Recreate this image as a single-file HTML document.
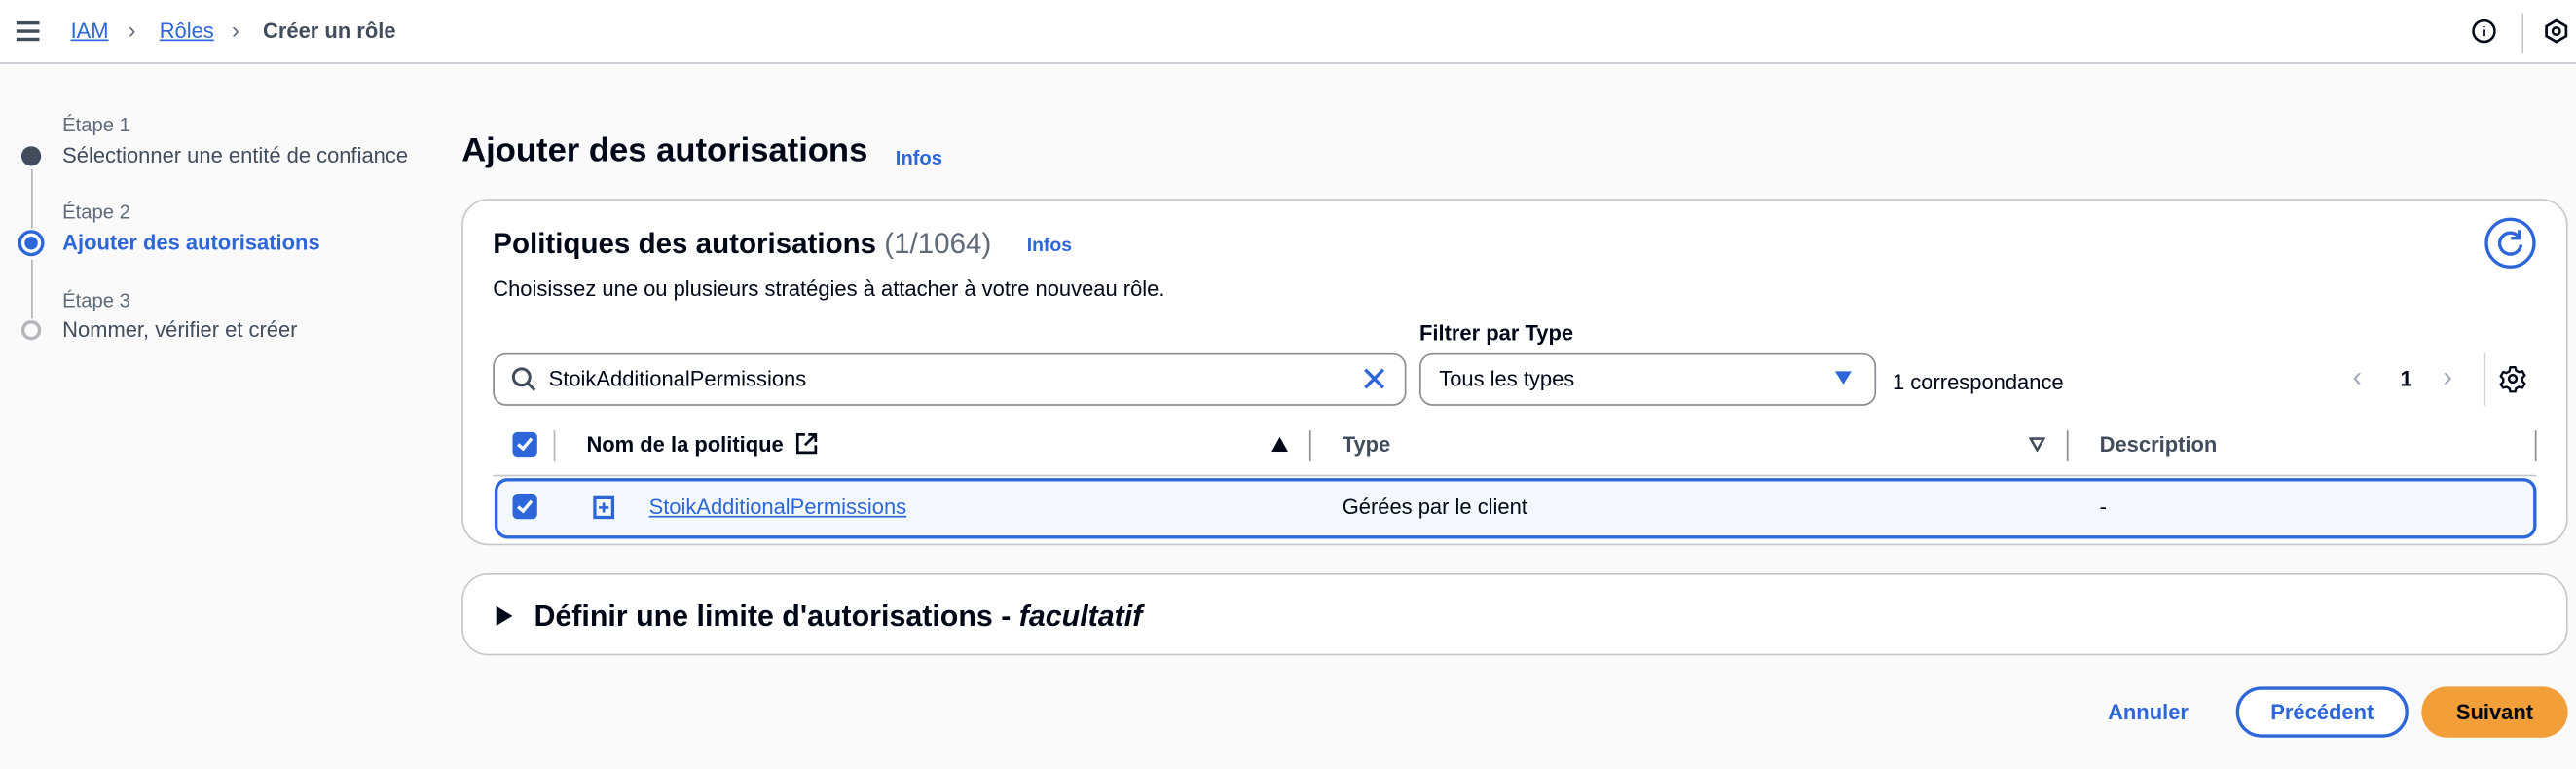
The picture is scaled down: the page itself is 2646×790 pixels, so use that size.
<!DOCTYPE html>
<html><head><meta charset="utf-8"><style>
*{box-sizing:border-box;margin:0;padding:0}
html,body{width:2646px;height:790px;overflow:hidden;background:#fafafa}
#s{position:absolute;left:0;top:0;width:1568px;height:468px;transform:scale(1.6875);transform-origin:0 0;font-family:"Liberation Sans",sans-serif;color:#000716;font-size:13px}
.a{position:absolute;white-space:nowrap}
.b{font-weight:bold}
.blue{color:#2d66d9}
.g{color:#5f6b7a}
.box{position:absolute;background:#fff;border:1px solid #c6c6cd;border-radius:16px}
.cb{position:absolute;width:15px;height:15px;background:#2d66d9;border-radius:3px}
.cb:after{content:"";position:absolute;left:5px;top:2px;width:3px;height:7px;border:solid #fff;border-width:0 2px 2px 0;transform:rotate(40deg)}
.dv{position:absolute;width:1px;background:#b4b4bb}
</style></head><body><div id="s">
<div class="a" style="left:0;top:0;width:1568px;height:39px;background:#fff;border-bottom:1px solid #c6c6cd"></div>
<div class="a" style="left:10px;top:13px;width:14px;height:2px;background:#414d5c;box-shadow:0 5px 0 #414d5c,0 10px 0 #414d5c"></div>
<div class="a blue" style="left:43px;top:11px;font-size:13px;text-decoration:underline">IAM</div>
<div class="a g" style="left:78px;top:10px;font-size:14px">&#x203A;</div>
<div class="a blue" style="left:97px;top:11px;font-size:13px;text-decoration:underline">Rôles</div>
<div class="a g" style="left:141px;top:10px;font-size:14px">&#x203A;</div>
<div class="a b" style="left:160px;top:11px;font-size:13px;color:#414d5c">Créer un rôle</div>
<svg class="a" style="left:1504px;top:11px" width="16" height="16"><circle cx="8" cy="8" r="6.5" fill="none" stroke="#000716" stroke-width="1.5"/><path d="M8 7v4M8 5v.5" stroke="#000716" stroke-width="1.6"/></svg>
<div class="dv" style="left:1535px;top:8px;height:24px;background:#c6c6cd"></div>
<svg class="a" style="left:1548px;top:11px" width="16" height="16"><path d="M8 1.5l6 3.5v6l-6 3.5-6-3.5v-6z" fill="none" stroke="#000716" stroke-width="1.6"/><circle cx="8" cy="8" r="2.2" fill="none" stroke="#000716" stroke-width="1.5"/></svg>

<div class="a g" style="left:38px;top:69px;font-size:12px">Étape 1</div>
<div class="a" style="left:38px;top:87px;font-size:13px;color:#414d5c">Sélectionner une entité de confiance</div>
<div class="a g" style="left:38px;top:122px;font-size:12px">Étape 2</div>
<div class="a b blue" style="left:38px;top:140px;font-size:13px">Ajouter des autorisations</div>
<div class="a g" style="left:38px;top:176px;font-size:12px">Étape 3</div>
<div class="a" style="left:38px;top:193px;font-size:13px;color:#414d5c">Nommer, vérifier et créer</div>
<div class="a" style="left:13px;top:89px;width:12px;height:12px;border-radius:50%;background:#414d5c"></div>
<div class="a" style="left:18.5px;top:103px;width:1px;height:36px;background:#b4b4bb"></div>
<div class="a" style="left:11px;top:140px;width:16px;height:16px;border-radius:50%;border:2px solid #2d66d9;background:#fff"></div>
<div class="a" style="left:15px;top:144px;width:8px;height:8px;border-radius:50%;background:#2d66d9"></div>
<div class="a" style="left:18.5px;top:158px;width:1px;height:36px;background:#b4b4bb"></div>
<div class="a" style="left:13px;top:195px;width:12px;height:12px;border-radius:50%;border:2px solid #b4b4bb"></div>

<div class="a b" style="left:281px;top:80px;font-size:20.5px">Ajouter des autorisations</div>
<div class="a b blue" style="left:545px;top:89px;font-size:12px">Infos</div>

<div class="box" style="left:281px;top:121px;width:1282px;height:211px"></div>
<div class="a b" style="left:300px;top:138px;font-size:17.5px">Politiques des autorisations <span style="font-weight:normal;color:#5f6b7a">(1/1064)</span></div>
<div class="a b blue" style="left:625px;top:144px;font-size:11.5px">Infos</div>
<div class="a" style="left:300px;top:168px;font-size:13px;color:#000716">Choisissez une ou plusieurs stratégies à attacher à votre nouveau rôle.</div>
<svg class="a" style="left:1512px;top:132px" width="32" height="32"><circle cx="16" cy="16" r="14.5" fill="#fff" stroke="#2d66d9" stroke-width="2"/><path d="M21 12a6.5 6.5 0 1 0 1.5 5" fill="none" stroke="#2d66d9" stroke-width="2"/><path d="M21.5 8v5h-5" fill="none" stroke="#2d66d9" stroke-width="2"/></svg>
<div class="a b" style="left:864px;top:195px;font-size:13px">Filtrer par Type</div>
<div class="a" style="left:300px;top:215px;width:556px;height:32px;border:1px solid #8c8c94;border-radius:8px;background:#fff"></div>
<svg class="a" style="left:311px;top:223px" width="16" height="16"><circle cx="6.5" cy="6.5" r="5" fill="none" stroke="#414d5c" stroke-width="1.8"/><path d="M10 10l4.5 4.5" stroke="#414d5c" stroke-width="1.8"/></svg>
<div class="a" style="left:334px;top:223px;font-size:13px">StoikAdditionalPermissions</div>
<svg class="a" style="left:829px;top:223px" width="15" height="15"><path d="M2 2l11 11M13 2L2 13" stroke="#2d66d9" stroke-width="2"/></svg>
<div class="a" style="left:864px;top:215px;width:278px;height:32px;border:1px solid #8c8c94;border-radius:8px;background:#fff"></div>
<div class="a" style="left:876px;top:223px;font-size:13px">Tous les types</div>
<svg class="a" style="left:1116px;top:225px" width="12" height="10"><path d="M1 1h10L6 9z" fill="#2d66d9"/></svg>
<div class="a" style="left:1152px;top:225px;font-size:13px">1 correspondance</div>
<div class="a" style="left:1432px;top:220px;font-size:17px;color:#9ba7b6">&#x2039;</div>
<div class="a b" style="left:1461px;top:223px;font-size:13px">1</div>
<div class="a" style="left:1487px;top:220px;font-size:17px;color:#9ba7b6">&#x203A;</div>
<div class="dv" style="left:1512px;top:215px;height:32px;background:#d1d5db"></div>
<svg class="a" style="left:1521px;top:222px" width="17" height="17"><circle cx="8.5" cy="8.5" r="2.3" fill="none" stroke="#000716" stroke-width="1.5"/><path d="M7 1.5h3l.5 2 1.8 1 2-.6 1.5 2.6-1.5 1.5v2l1.5 1.5-1.5 2.6-2-.6-1.8 1-.5 2H7l-.5-2-1.8-1-2 .6L1.2 12l1.5-1.5v-2L1.2 7l1.5-2.6 2 .6 1.8-1z" fill="none" stroke="#000716" stroke-width="1.4" stroke-linejoin="round"/></svg>

<div class="cb" style="left:312px;top:263px"></div>
<div class="dv" style="left:337px;top:262px;height:19px"></div>
<div class="a b" style="left:357px;top:263px;font-size:13px">Nom de la politique</div>
<svg class="a" style="left:484px;top:263px" width="14" height="14"><path d="M6 1.5H1.5v11h11V8M8 1.5h4.5V6M12.5 1.5L6 8" fill="none" stroke="#000716" stroke-width="1.6"/></svg>
<svg class="a" style="left:774px;top:266px" width="10" height="9"><path d="M5 0l5 9H0z" fill="#000716"/></svg>
<div class="dv" style="left:797px;top:262px;height:19px;background:#8c8c94"></div>
<div class="a b" style="left:817px;top:263px;font-size:13px;color:#414d5c">Type</div>
<svg class="a" style="left:1235px;top:266px" width="10" height="9"><path d="M1 1h8L5 8z" fill="none" stroke="#414d5c" stroke-width="1.5"/></svg>
<div class="dv" style="left:1258px;top:262px;height:19px;background:#8c8c94"></div>
<div class="a b" style="left:1278px;top:263px;font-size:13px;color:#414d5c">Description</div>
<div class="dv" style="left:1543px;top:262px;height:19px;background:#8c8c94"></div>
<div class="a" style="left:300px;top:289px;width:1244px;height:1px;background:#c6c6cd"></div>
<div class="a" style="left:301px;top:291px;width:1243px;height:37px;background:#f2f8fd;border:2px solid #2d66d9;border-radius:8px"></div>
<div class="cb" style="left:312px;top:301px"></div>
<svg class="a" style="left:361px;top:302px" width="13" height="14"><rect x="1" y="1" width="11" height="12" fill="none" stroke="#2d66d9" stroke-width="2"/><path d="M6.5 4v6M3.5 7h6" stroke="#2d66d9" stroke-width="1.6"/></svg>
<div class="a blue" style="left:395px;top:301px;font-size:13px;text-decoration:underline">StoikAdditionalPermissions</div>
<div class="a" style="left:817px;top:301px;font-size:13px">Gérées par le client</div>
<div class="a" style="left:1278px;top:301px;font-size:13px">-</div>

<div class="box" style="left:281px;top:349px;width:1282px;height:50px"></div>
<svg class="a" style="left:302px;top:369px" width="10" height="12"><path d="M0 0l10 6-10 6z" fill="#000716"/></svg>
<div class="a b" style="left:325px;top:365px;font-size:18px">Définir une limite d'autorisations - <i>facultatif</i></div>

<div class="a b blue" style="left:1283px;top:426px;font-size:13px">Annuler</div>
<div class="a b blue" style="left:1361px;top:418px;width:105px;height:31px;border:2px solid #2d66d9;border-radius:16px;background:#fff;text-align:center;line-height:27px;font-size:13px">Précédent</div>
<div class="a b" style="left:1474px;top:418px;width:89px;height:31px;border-radius:16px;background:#f29e39;text-align:center;line-height:31px;font-size:13px">Suivant</div>
</div></body></html>
